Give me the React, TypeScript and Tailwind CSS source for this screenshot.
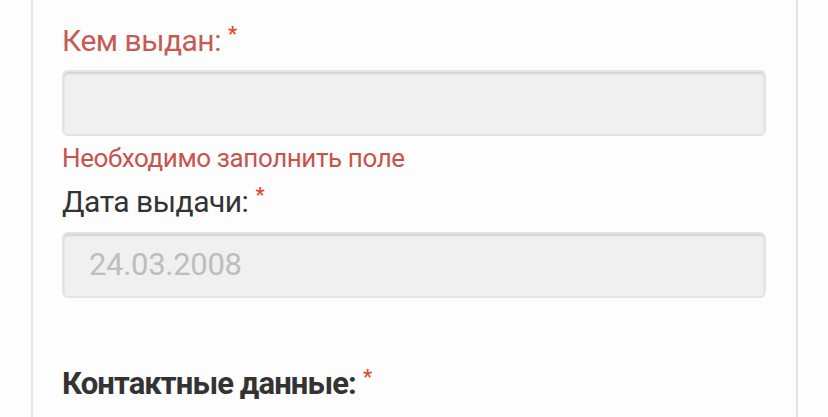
import React from "react";

const Star = () => (
  <span className="ml-[7px] align-top text-[20px] leading-none font-bold text-[#e8472f] relative top-[1px] tracking-normal">*</span>
);

export default function App() {
  return (
    <div className="w-[828px] h-[417px] bg-[#fdfdfd] overflow-hidden" style={{ fontFamily: "Roboto, 'Noto Sans', sans-serif" }}>
      <div className="ml-[31px] w-[767px] h-full border-x-2 border-[#e3e3e3] pl-[29px] pr-[30px] pt-[23px]">
        <div className="text-[30px] leading-[36px] tracking-[-0.5px] text-[#c65a54] flex items-start">
          <span>Кем выдан:</span>
          <Star />
        </div>
        <div className="mt-[11px] h-[66px] rounded-[6px] bg-[#f0f0f0] border-2 border-[#e4e4e4] shadow-[inset_0_2px_2px_rgba(0,0,0,0.12)]"></div>
        <div className="mt-[6px] text-[26px] leading-[32px] tracking-[-0.4px] text-[#c9534c]">Необходимо заполнить поле</div>
        <div className="mt-[10px] text-[30px] leading-[36px] tracking-[-0.5px] text-[#333333] flex items-start">
          <span>Дата выдачи:</span>
          <Star />
        </div>
        <div className="mt-[12px] h-[66px] rounded-[6px] bg-[#f0f0f0] border-2 border-[#e4e4e4] shadow-[inset_0_2px_2px_rgba(0,0,0,0.12)] flex items-center pl-[25px]">
          <span className="text-[31px] tracking-[-0.3px] text-[#bdbdbd]">24.03.2008</span>
        </div>
        <div className="mt-[68px] text-[31px] leading-[36px] tracking-[-0.9px] font-bold text-[#333333] flex items-start">
          <span>Контактные данные:</span>
          <Star />
        </div>
      </div>
    </div>
  );
}
